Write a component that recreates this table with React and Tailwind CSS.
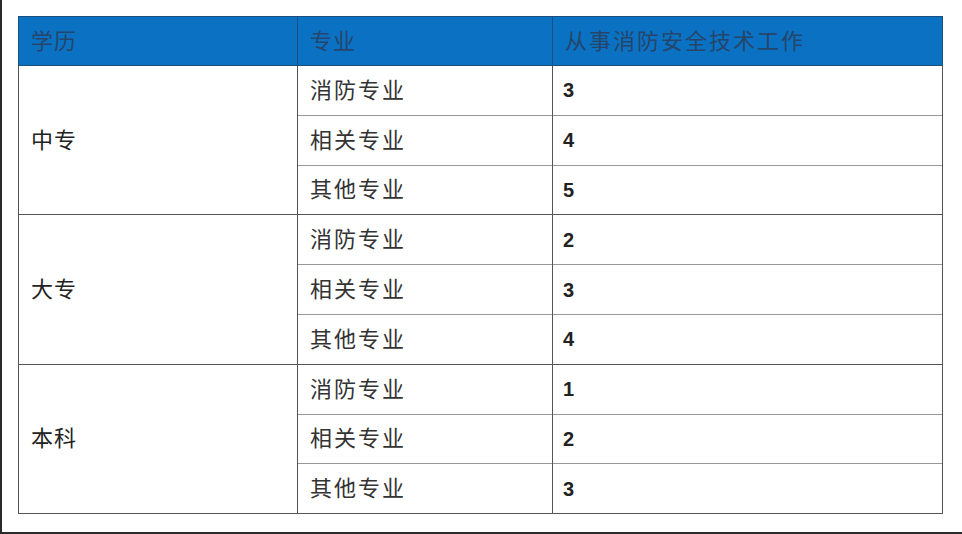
import React from "react";

const groups = [
  { name: "中专", rows: [["消防专业", "3"], ["相关专业", "4"], ["其他专业", "5"]] },
  { name: "大专", rows: [["消防专业", "2"], ["相关专业", "3"], ["其他专业", "4"]] },
  { name: "本科", rows: [["消防专业", "1"], ["相关专业", "2"], ["其他专业", "3"]] },
];

export default function App() {
  const font = { fontFamily: '"Liberation Sans", "Noto Sans CJK SC", sans-serif' };
  return (
    <div className="w-[962px] h-[534px] bg-white border-l-2 border-b-2 border-[#2a2a2a] pt-[16px] pl-[16px]" style={font}>
      <table className="border-collapse table-fixed w-[924px]">
        <colgroup>
          <col className="w-[279px]" />
          <col className="w-[255px]" />
          <col className="w-[390px]" />
        </colgroup>
        <thead>
          <tr className="h-[49px] bg-[#0b72c3]">
            <th className="border border-[#1a4f80] text-left font-normal text-[22px] tracking-[1px] text-[#25456a] pl-[12px]">学历</th>
            <th className="border border-[#1a4f80] text-left font-normal text-[22px] tracking-[1px] text-[#25456a] pl-[12px]">专业</th>
            <th className="border border-[#1a4f80] text-left font-normal text-[22px] tracking-[2px] text-[#25456a] pl-[12px]">从事消防安全技术工作</th>
          </tr>
        </thead>
        <tbody>
          {groups.map((g) =>
            g.rows.map((r, i) => (
              <tr key={g.name + i} className="h-[49.8px]">
                {i === 0 && (
                  <td rowSpan={3} className="border border-[#555] text-[22px] tracking-[1px] text-[#222] pl-[12px] align-middle">
                    {g.name}
                  </td>
                )}
                <td className={`border-x border-[#555] ${i === 0 ? "border-t border-t-[#555]" : "border-t border-t-[#999]"} ${i === 2 ? "border-b border-b-[#555]" : ""} text-[22px] tracking-[2px] text-[#333] pl-[12px]`}>
                  {r[0]}
                </td>
                <td className={`border-x border-[#555] ${i === 0 ? "border-t border-t-[#555]" : "border-t border-t-[#999]"} ${i === 2 ? "border-b border-b-[#555]" : ""} text-[20px] font-bold text-[#222] pl-[10px]`}>
                  {r[1]}
                </td>
              </tr>
            ))
          )}
        </tbody>
      </table>
    </div>
  );
}
